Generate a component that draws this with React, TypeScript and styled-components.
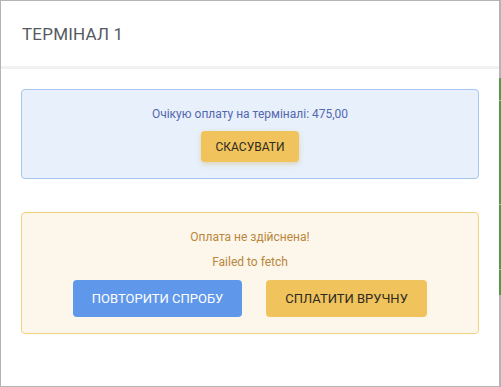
import { FC } from "react";
import styled, { createGlobalStyle } from "styled-components";

const Global = createGlobalStyle`
  html, body {
    margin: 0;
    padding: 0;
    background: #b4b4b4;
    font-family: Roboto, "Liberation Sans", sans-serif;
  }
`;

const Backdrop = styled.div`
  position: relative;
  width: 501px;
  height: 387px;
  padding: 1px 0 0 1px;
  box-sizing: border-box;
  overflow: hidden;
`;

// strip of the page behind the overlay, visible at the right edge
const PageStrip = styled.div<{ top: number; height: number }>`
  position: absolute;
  right: 0;
  width: 2px;
  top: ${(p) => p.top}px;
  height: ${(p) => p.height}px;
  background: #4f9a46;
`;

const Modal = styled.div`
  width: 498px;
  height: 385px;
  background: #fff;
  display: flex;
  flex-direction: column;
`;

const Header = styled.div`
  height: 65px;
  display: flex;
  align-items: center;
  padding: 0 21px;
  border-bottom: 3px solid #f1f1f1;
  font-size: 17px;
  color: #555a5f;
  letter-spacing: 0.2px;
`;

const Body = styled.div`
  padding: 20px 20px 0 20px;
  display: flex;
  flex-direction: column;
  gap: 33px;
`;

const Alert = styled.div<{ tone: "info" | "warn" }>`
  border: 1px solid ${(p) => (p.tone === "info" ? "#a5c6ee" : "#f2d27f")};
  background: ${(p) => (p.tone === "info" ? "#e7f0fb" : "#fdf6ea")};
  color: ${(p) => (p.tone === "info" ? "#5567b0" : "#b8873c")};
  border-radius: 4px;
  padding: 16px 16px 16px;
  display: flex;
  flex-direction: column;
  align-items: center;
  font-size: 12px;
`;

const Line = styled.div`
  line-height: 16px;
  margin-bottom: 9px;
`;

const Buttons = styled.div`
  display: flex;
  gap: 24px;
  margin-top: 1px;
`;

const Button = styled.button<{ kind: "primary" | "warning"; w: number; h: number }>`
  width: ${(p) => p.w}px;
  height: ${(p) => p.h}px;
  border: none;
  border-radius: 4px;
  font-family: Roboto, "Liberation Sans", sans-serif;
  font-size: ${(p) => (p.h > 33 ? 13 : 12)}px;
  background: ${(p) => (p.kind === "primary" ? "#5f97eb" : "#f0c35c")};
  color: ${(p) => (p.kind === "primary" ? "#fff" : "#2e2a22")};
  box-shadow: ${(p) => (p.h > 33 ? "none" : "0 2px 5px rgba(200, 160, 60, 0.35)")};
  padding: 0;
  cursor: pointer;
`;

const App: FC = () => {
  return (
    <>
      <Global />
      <Backdrop>
        <PageStrip top={78} height={22} />
        <PageStrip top={101} height={103} />
        <PageStrip top={205} height={64} />
        <PageStrip top={270} height={25} />
        <Modal>
          <Header>ТЕРМІНАЛ 1</Header>
          <Body>
            <Alert tone="info">
              <Line>Очікую оплату на терміналі: 475,00</Line>
              <Button kind="warning" w={98} h={31}>
                СКАСУВАТИ
              </Button>
            </Alert>
            <Alert tone="warn">
              <Line>Оплата не здійснена!</Line>
              <Line>Failed to fetch</Line>
              <Buttons>
                <Button kind="primary" w={169} h={37}>
                  ПОВТОРИТИ СПРОБУ
                </Button>
                <Button kind="warning" w={161} h={37}>
                  СПЛАТИТИ ВРУЧНУ
                </Button>
              </Buttons>
            </Alert>
          </Body>
        </Modal>
      </Backdrop>
    </>
  );
};

export default App;
